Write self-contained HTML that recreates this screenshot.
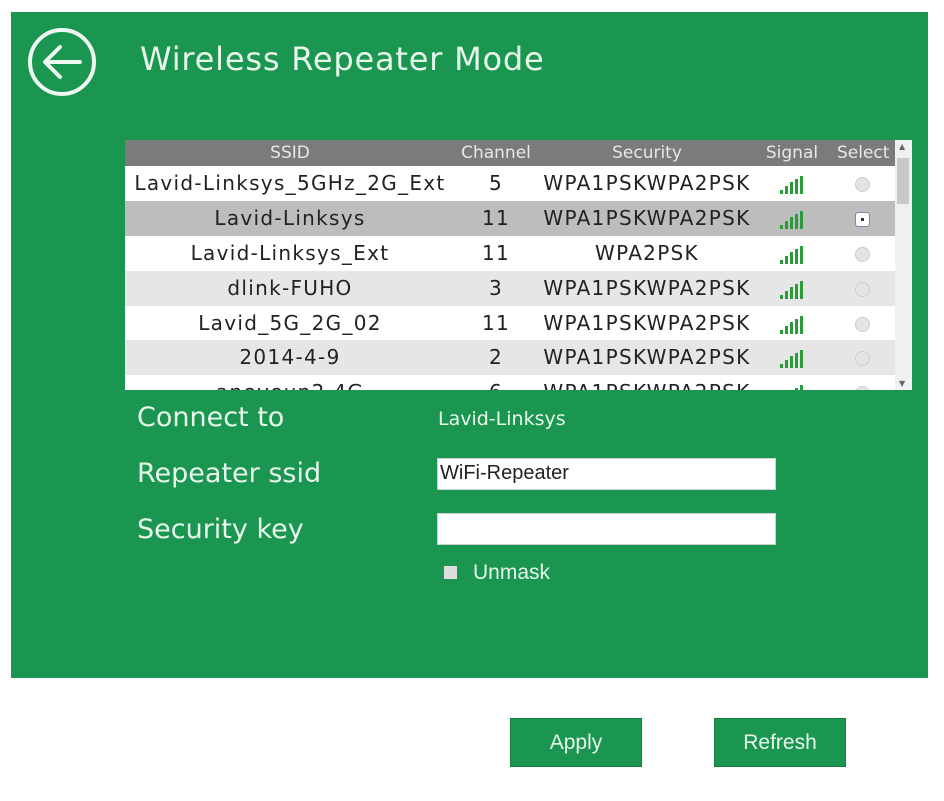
<!DOCTYPE html>
<html><head><meta charset="utf-8"><style>
*{margin:0;padding:0;box-sizing:border-box}
body{width:944px;height:801px;background:#fff;position:relative;overflow:hidden;font-family:"DejaVu Sans","Liberation Sans",sans-serif}
.panel{position:absolute;left:11px;top:12px;width:917px;height:666px;background:#1a9650}
.t{position:absolute;color:#e8f7ec}
.tbl{position:absolute;left:125px;top:140px;width:787px;height:250px;background:#fff;overflow:hidden}
.row{position:absolute;left:0;width:770px;height:35px;font-size:20px;letter-spacing:1.3px;color:#222}
.row span,.hdr span{position:absolute;top:0;text-align:center;white-space:nowrap}
.hdr{position:absolute;left:0;top:0;width:770px;height:26px;background:#7b7b7b;color:#e8e8e8;font-size:17px}
.c1{left:0;width:330px}.c2{left:330px;width:82px}.c3{left:412px;width:220px}.c4{left:632px;width:70px}.c5{left:702px;width:70px}
.row span{line-height:35px}.hdr span{line-height:26px}
.sig{display:inline-block;width:24px;height:18px;vertical-align:middle;position:relative}
.sig i{position:absolute;bottom:0;width:3px;background:#2a9a3a}
.rad{display:inline-block;width:15px;height:15px;border-radius:50%;background:#e4e4e4;border:1px solid #ccc;vertical-align:middle}
.sb{position:absolute;left:770px;top:0;width:17px;height:250px;background:#f0f0f0}
.inp{position:absolute;left:437px;width:339px;height:32px;background:#fff;border:1px solid #d0d0d0}
.btn{position:absolute;top:718px;width:132px;height:49px;background:#1a9650;border:1px solid #137a3e;color:#e8f7ec;font-family:"Liberation Sans",sans-serif;font-size:21px;text-align:center;line-height:47px}
</style></head><body>
<div class="panel"></div>
<svg style="position:absolute;left:26px;top:26px" width="72" height="72" viewBox="0 0 72 72"><circle cx="36" cy="36" r="32" fill="none" stroke="#eef8f0" stroke-width="4"/><path d="M54 36H20M34 21L19 36L34 51" fill="none" stroke="#eef8f0" stroke-width="4" stroke-linecap="round" stroke-linejoin="round"/></svg>
<div class="t" style="left:140px;top:40px;font-size:32px;letter-spacing:0.8px">Wireless Repeater Mode</div>
<div class="tbl">
<div class="hdr"><span class="c1">SSID</span><span class="c2">Channel</span><span class="c3">Security</span><span class="c4">Signal</span><span class="c5" style="text-align:left;padding-left:10px">Select</span></div>
<div class="row" style="top:26px;background:#fff"><span class="c1">Lavid-Linksys_5GHz_2G_Ext</span><span class="c2">5</span><span class="c3">WPA1PSKWPA2PSK</span><span class="c4"><b class="sig"><i style="left:0;height:4px"></i><i style="left:5px;height:8px"></i><i style="left:10px;height:12px"></i><i style="left:15px;height:15px"></i><i style="left:20px;height:18px"></i></b></span><span class="c5"><b class="rad"></b></span></div>
<div class="row" style="top:61px;background:#bdbdbd"><span class="c1">Lavid-Linksys</span><span class="c2">11</span><span class="c3">WPA1PSKWPA2PSK</span><span class="c4"><b class="sig"><i style="left:0;height:4px"></i><i style="left:5px;height:8px"></i><i style="left:10px;height:12px"></i><i style="left:15px;height:15px"></i><i style="left:20px;height:18px"></i></b></span><span class="c5"><b class="rad" style="background:#fff;border-color:#7a8ab0;border-radius:3px;box-shadow:inset 0 0 0 5px #fff,inset 0 0 0 8px #333"></b></span></div>
<div class="row" style="top:96px;background:#fff"><span class="c1">Lavid-Linksys_Ext</span><span class="c2">11</span><span class="c3">WPA2PSK</span><span class="c4"><b class="sig"><i style="left:0;height:4px"></i><i style="left:5px;height:8px"></i><i style="left:10px;height:12px"></i><i style="left:15px;height:15px"></i><i style="left:20px;height:18px"></i></b></span><span class="c5"><b class="rad"></b></span></div>
<div class="row" style="top:131px;background:#e6e6e6"><span class="c1">dlink-FUHO</span><span class="c2">3</span><span class="c3">WPA1PSKWPA2PSK</span><span class="c4"><b class="sig"><i style="left:0;height:4px"></i><i style="left:5px;height:8px"></i><i style="left:10px;height:12px"></i><i style="left:15px;height:15px"></i><i style="left:20px;height:18px"></i></b></span><span class="c5"><b class="rad"></b></span></div>
<div class="row" style="top:166px;background:#fff"><span class="c1">Lavid_5G_2G_02</span><span class="c2">11</span><span class="c3">WPA1PSKWPA2PSK</span><span class="c4"><b class="sig"><i style="left:0;height:4px"></i><i style="left:5px;height:8px"></i><i style="left:10px;height:12px"></i><i style="left:15px;height:15px"></i><i style="left:20px;height:18px"></i></b></span><span class="c5"><b class="rad"></b></span></div>
<div class="row" style="top:200px;background:#e6e6e6"><span class="c1">2014-4-9</span><span class="c2">2</span><span class="c3">WPA1PSKWPA2PSK</span><span class="c4"><b class="sig"><i style="left:0;height:4px"></i><i style="left:5px;height:8px"></i><i style="left:10px;height:12px"></i><i style="left:15px;height:15px"></i><i style="left:20px;height:18px"></i></b></span><span class="c5"><b class="rad"></b></span></div>
<div class="row" style="top:235px;background:#fff"><span class="c1">aneyeun2.4G</span><span class="c2">6</span><span class="c3">WPA1PSKWPA2PSK</span><span class="c4"><b class="sig"><i style="left:0;height:4px"></i><i style="left:5px;height:8px"></i><i style="left:10px;height:12px"></i><i style="left:15px;height:15px"></i><i style="left:20px;height:18px"></i></b></span><span class="c5"><b class="rad"></b></span></div>
<div class="sb"><div style="position:absolute;left:2px;top:18px;width:12px;height:46px;background:#c8c8c8"></div><div style="position:absolute;left:4px;top:2px;font-size:8px;color:#666">▲</div><div style="position:absolute;left:4px;bottom:2px;font-size:8px;color:#666">▼</div></div>
</div>
<div class="t" style="left:137px;top:402px;font-size:27px">Connect to</div>
<div class="t" style="left:438px;top:408px;font-size:19px">Lavid-Linksys</div>
<div class="t" style="left:137px;top:458px;font-size:27px">Repeater ssid</div>
<div class="inp" style="top:458px"><span style="position:absolute;left:2px;top:3px;font-family:'Liberation Sans',sans-serif;font-size:20px;color:#222">WiFi-Repeater</span></div>
<div class="t" style="left:137px;top:514px;font-size:27px">Security key</div>
<div class="inp" style="top:513px"></div>
<div style="position:absolute;left:444px;top:566px;width:13px;height:13px;background:#ddd"></div>
<div class="t" style="left:473px;top:561px;font-size:21px;font-family:'Liberation Sans',sans-serif">Unmask</div>
<div class="btn" style="left:510px">Apply</div>
<div class="btn" style="left:714px">Refresh</div>
</body></html>
